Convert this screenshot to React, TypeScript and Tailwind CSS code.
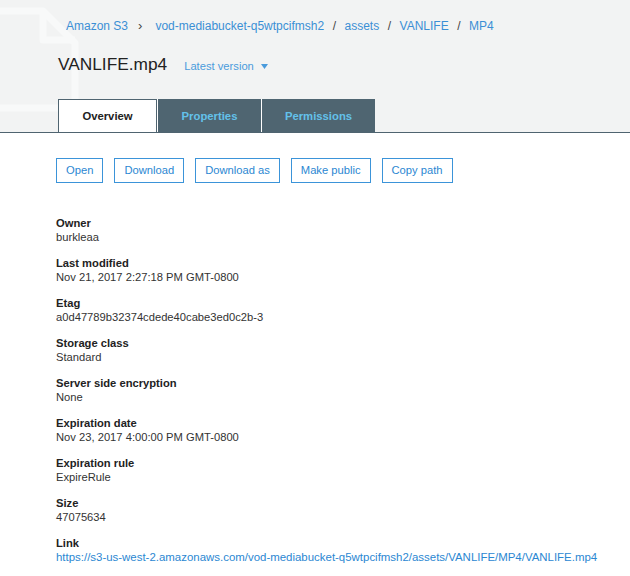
const crumbs = ['vod-mediabucket-q5wtpcifmsh2', 'assets', 'VANLIFE', 'MP4']

const actions = ['Open', 'Download', 'Download as', 'Make public', 'Copy path']

const fields: { label: string; value: string; link?: boolean }[] = [
  { label: 'Owner', value: 'burkleaa' },
  { label: 'Last modified', value: 'Nov 21, 2017 2:27:18 PM GMT-0800' },
  { label: 'Etag', value: 'a0d47789b32374cdede40cabe3ed0c2b-3' },
  { label: 'Storage class', value: 'Standard' },
  { label: 'Server side encryption', value: 'None' },
  { label: 'Expiration date', value: 'Nov 23, 2017 4:00:00 PM GMT-0800' },
  { label: 'Expiration rule', value: 'ExpireRule' },
  { label: 'Size', value: '47075634' },
  {
    label: 'Link',
    value: 'https://s3-us-west-2.amazonaws.com/vod-mediabucket-q5wtpcifmsh2/assets/VANLIFE/MP4/VANLIFE.mp4',
    link: true,
  },
]

const FileWatermark = (): JSX.Element => (
  <svg className="absolute left-0 top-0" width="90" height="125" viewBox="0 0 90 125" fill="none" aria-hidden="true">
    <path
      d="M-20 11H43L75 43V108H-20"
      stroke="#f8f9f9"
      strokeWidth={7}
      strokeLinejoin="round"
    />
    <path d="M43 11V40H75" stroke="#f8f9f9" strokeWidth={7} strokeLinejoin="round" />
  </svg>
)

const App = (): JSX.Element => {
  return (
    <div className="min-h-[576px] overflow-hidden bg-white font-['Liberation_Sans',Arial,sans-serif] text-[#222]">
      <div className="relative h-[133px] overflow-hidden border-b border-[#4f6470] bg-[#f2f3f3]">
        <FileWatermark />
        <div className="relative pl-[58px]">
          <nav className="flex h-[51px] items-center pl-[8px] text-[12px] leading-none">
            <span className="text-[#3b8fd5]">Amazon S3</span>
            <span className="ml-[10px] mr-[13px] text-[13px] text-[#444]">›</span>
            {crumbs.map((c, i) => (
              <span key={c} className="flex items-center">
                {i > 0 && <span className="mx-[8.5px] text-[#444]">/</span>}
                <span className="text-[#3b8fd5]">{c}</span>
              </span>
            ))}
          </nav>
          <div className="flex h-[28px] items-center">
            <h1 className="text-[17.3px] leading-none text-[#222]">VANLIFE.mp4</h1>
            <button className="ml-[17px] mt-[3px] flex items-center text-[11.2px] text-[#4a9bdc]">
              Latest version
              <svg className="ml-[7px]" width="7" height="5" viewBox="0 0 7 5">
                <path d="M0 0H7L3.5 5Z" fill="#4a9bdc" />
              </svg>
            </button>
          </div>
          <div className="mt-[20px] flex h-[34px] text-[11.3px] font-bold">
            <div className="flex w-[99px] items-center justify-center border border-b-0 border-[#4f6470] bg-white text-[#222]">
              Overview
            </div>
            <div className="flex w-[104px] items-center justify-center border-l border-white bg-[#4f6571] text-[#63c1ea]">
              Properties
            </div>
            <div className="flex w-[114px] items-center justify-center border-l border-white bg-[#4f6571] text-[#63c1ea]">
              Permissions
            </div>
          </div>
        </div>
      </div>

      <div className="px-[56px]">
        <div className="mt-[25px] flex gap-[11px]">
          {actions.map((a) => (
            <button
              key={a}
              className="h-[25px] border border-[#3b94d9] bg-white px-[9px] text-[11.2px] leading-none text-[#2b87d2]"
            >
              {a}
            </button>
          ))}
        </div>

        <div className="mt-[33px] flex flex-col gap-[12px] text-[11.2px] leading-[14px]">
          {fields.map((f) => (
            <div key={f.label}>
              <div className="font-bold text-[#222]">{f.label}</div>
              <div className={f.link ? 'whitespace-nowrap text-[11.45px] text-[#2b87d2]' : 'text-[#333]'}>{f.value}</div>
            </div>
          ))}
        </div>
      </div>
    </div>
  )
}

export default App
